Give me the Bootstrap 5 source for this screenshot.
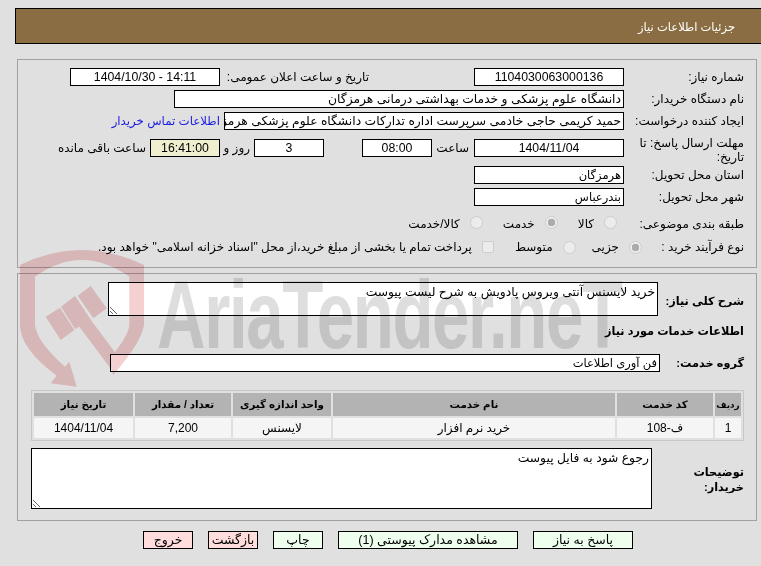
<!DOCTYPE html>
<html lang="fa" dir="rtl">
<head>
<meta charset="utf-8">
<title>جزئیات اطلاعات نیاز</title>
<link href="https://cdn.jsdelivr.net/npm/bootstrap@5.3.0/dist/css/bootstrap.min.css" rel="stylesheet">
<style>
html,body{height:566px;overflow:hidden}
body{background:#e0e0e0;color:#000;font:12px/16px "Liberation Sans","DejaVu Sans",sans-serif;position:relative;width:761px}
.page{padding:8px 4px 0 17px}
.hdr{background:#8b6d43;border:1px solid #000;border-right:0;height:36px;margin:0 -4px 15px -2px;color:#fff;padding:10px 26px 0 0;font-size:11.5px}
.pane{border:1px solid #a0a0a0;padding:8px 12px 0 0}
.pane1{height:209px}
.pane2{height:248px;margin-top:5px}
.frow{display:flex;align-items:center;height:18px;margin-bottom:4px}
.lbl{width:120px;flex:none}
.bold{font-weight:700;font-size:11.3px;white-space:nowrap}
.fld{background:#fff;border:1px solid #000;border-radius:0;height:18px;flex:none;white-space:nowrap;overflow:hidden;color:#000}
.fld.form-control{min-height:0;font:12.3px/16px "Liberation Sans","DejaVu Sans",sans-serif;padding:0 2px}
.fld.form-control.narrowtxt{font-size:11.5px}
.fld.ctr{text-align:center}
.w150{width:150px}.w70{width:70px}
.w400{width:400px}.w450{width:450px}
.fld.warm{background:#efefcf}
.tall{height:28px;margin-top:0;line-height:14px}
.tall .lbl{padding-top:3px}
.radios{display:flex;align-items:center;height:18px}
.rd{appearance:none;width:13px;height:13px;margin:0 0 0 10px;flex:none;border:1px solid #cdcdcd;background:#ececec;border-radius:50%}
.rd.sq{border-radius:2px;width:12px;height:12px;margin-top:-1px}
.rd:checked{background:radial-gradient(circle,#ababab 0 3.5px,#ececec 4px)}
.up{margin-top:-4px}
.opt{display:flex;align-items:center;white-space:nowrap;margin:0}
.buylink{color:#1a1ae0;text-decoration:none;margin-right:4px;font-size:11.8px}
.area{display:block;background:#fff;border:1px solid #000;border-radius:0;font:12.3px/16px "Liberation Sans","DejaVu Sans",sans-serif;padding:1px 2px;color:#000;flex:none;outline:0}
.a1{width:550px;height:34px}
.a2{width:621px;height:61px}
.svc{width:713px;table-layout:fixed;margin:0;border:1px solid #c8c8c8;border-collapse:separate;border-spacing:2px;background:#e0e0e0}
.svc th,.svc td{padding:0;text-align:center;vertical-align:middle;border:0;overflow:hidden;white-space:nowrap}
.svc th{background:#b3b3b3;height:23px;font-weight:700;font-size:10.3px}
.svc th.tiny{font-size:8.8px}
.svc td{background:#f5f5f5;height:20px}
.acts{display:flex;justify-content:center;gap:15px;margin:10px 0 0 0;transform:translateX(1px)}
.act{border:1px solid #000;border-radius:0;height:18px;padding:0;font:12.5px/16px "Liberation Sans","DejaVu Sans",sans-serif;color:#000}
.btn.ok{background:#eeffee}.btn.no{background:#ffdddd}
.mark-wrap{position:absolute;left:0;top:245px;z-index:5;width:761px;height:145px;overflow:hidden;pointer-events:none;mix-blend-mode:multiply}
.mark-shield{position:absolute;left:10px;top:0}
.mark-text{position:absolute;left:157px;top:15px;direction:ltr;font:700 96px/110px "Liberation Sans",sans-serif;color:#dedede;letter-spacing:-2px;white-space:nowrap;transform:scaleX(.7);transform-origin:left top}
</style>
</head>
<body>
<div class="mark-wrap">
<svg class="mark-shield" width="150" height="145" viewBox="0 0 450 435">
<path fill="#f4d0d0" d="M30 60Q215-30 402 60L402 240Q395 290 310 390L295 345Q355 275 358 240L358 95Q215-5 75 95L75 240Q80 290 165 365L178 350L200 425L122 415L140 392Q30 310 30 240Z"/>
<path fill="#f4d0d0" d="M107 215L150 188L193 255L152 285ZM153 185L195 153L245 228L332 345L305 375L208 245L195 252ZM203 152L242 123L290 190L250 220Z"/>
</svg>
<div class="mark-text">AriaTender.neT</div>
</div>
<div class="page">
<div class="hdr">جزئیات اطلاعات نیاز</div>
<div class="pane pane1">
<div class="frow"><div class="lbl">شماره نیاز:</div><div class="fld form-control w150 ctr">1104030063000136</div>
<div class="text-nowrap" style="margin-right:105px;width:149px">تاریخ و ساعت اعلان عمومی:</div><div class="fld form-control w150 ctr">14:11 - 1404/10/30</div></div>
<div class="frow"><div class="lbl">نام دستگاه خریدار:</div><div class="fld form-control w450">دانشگاه علوم پزشکی و خدمات بهداشتی درمانی هرمزگان</div></div>
<div class="frow"><div class="lbl">ایجاد کننده درخواست:</div><div class="fld form-control w400">حمید کریمی حاجی خادمی سرپرست اداره تدارکات دانشگاه علوم پزشکی هرمزگان</div><a class="buylink" href="#">اطلاعات تماس خریدار</a></div>
<div class="frow tall"><div class="lbl">مهلت ارسال پاسخ: تا تاریخ:</div><div class="fld form-control w150 ctr">1404/11/04</div><span style="margin-right:5px;width:37px">ساعت</span><div class="fld form-control w70 ctr">08:00</div><div class="fld form-control w70 ctr" style="margin-right:38px">3</div><span style="margin-right:4px;width:30px">روز و</span><div class="fld form-control w70 ctr warm">16:41:00</div><span class="me-1 text-nowrap">ساعت باقی مانده</span></div>
<div class="frow"><div class="lbl">استان محل تحویل:</div><div class="fld form-control narrowtxt w150">هرمزگان</div></div>
<div class="frow"><div class="lbl">شهر محل تحویل:</div><div class="fld form-control narrowtxt w150">بندرعباس</div></div>
<div class="frow" style="margin-top:9px;margin-bottom:5px"><div class="lbl">طبقه بندی موضوعی:</div><div class="radios">
<label class="opt" style="margin-right:7px"><input class="rd up" type="radio" disabled name="a">کالا</label>
<label class="opt" style="margin-right:20px"><input class="rd up" type="radio" disabled name="a" checked>خدمت</label>
<label class="opt" style="margin-right:20px"><input class="rd up" type="radio" disabled name="a">کالا/خدمت</label></div></div>
<div class="frow"><div class="lbl">نوع فرآیند خرید :</div><div class="radios" style="margin-right:-18px">
<label class="opt"><input class="rd" type="radio" disabled name="b" checked>جزیی</label>
<label class="opt" style="margin-right:16px"><input class="rd" type="radio" disabled name="b">متوسط</label>
<label class="opt" style="margin-right:21px"><input class="rd sq" type="checkbox" disabled>پرداخت تمام یا بخشی از مبلغ خرید،از محل "اسناد خزانه اسلامی" خواهد بود.</label></div></div>
</div>
<div class="pane pane2">
<div class="d-flex align-items-center" style="height:34px"><div class="lbl bold" style="width:86px;padding-top:3px">شرح کلی نیاز:</div><textarea class="area a1" readonly>خرید لایسنس آنتی ویروس پادویش به شرح لیست پیوست</textarea></div>
<div class="bold" style="margin-top:6px;height:32px;line-height:18px">اطلاعات خدمات مورد نیاز</div>
<div class="d-flex align-items-center" style="height:18px"><div class="lbl bold" style="width:84px">گروه خدمت:</div><div class="fld form-control narrowtxt" style="width:550px">فن آوری اطلاعات</div></div>
<table class="svc" style="margin-top:18px">
<thead><tr><th class="tiny" style="width:26px">ردیف</th><th style="width:96px">کد خدمت</th><th style="width:282px">نام خدمت</th><th style="width:98px">واحد اندازه گیری</th><th style="width:96px">تعداد / مقدار</th><th>تاریخ نیاز</th></tr></thead>
<tbody><tr><td>1</td><td>ف-108</td><td>خرید نرم افزار</td><td>لایسنس</td><td>7,200</td><td>1404/11/04</td></tr></tbody>
</table>
<div class="d-flex align-items-center" style="margin-top:7px"><div class="lbl bold" style="width:92px;line-height:15px;padding-top:3px">توضیحات<br>خریدار:</div><textarea class="area a2" readonly>رجوع شود به فایل پیوست</textarea></div>
</div>
<div class="acts">
<button class="btn act ok" style="width:100px">پاسخ به نیاز</button>
<button class="btn act ok" style="width:180px">مشاهده مدارک پیوستی (1)</button>
<button class="btn act ok" style="width:50px">چاپ</button>
<button class="btn act no" style="width:50px">بازگشت</button>
<button class="btn act no" style="width:50px">خروج</button>
</div>
</div>
<script src="https://cdn.jsdelivr.net/npm/bootstrap@5.3.0/dist/js/bootstrap.bundle.min.js"></script>
</body>
</html>
